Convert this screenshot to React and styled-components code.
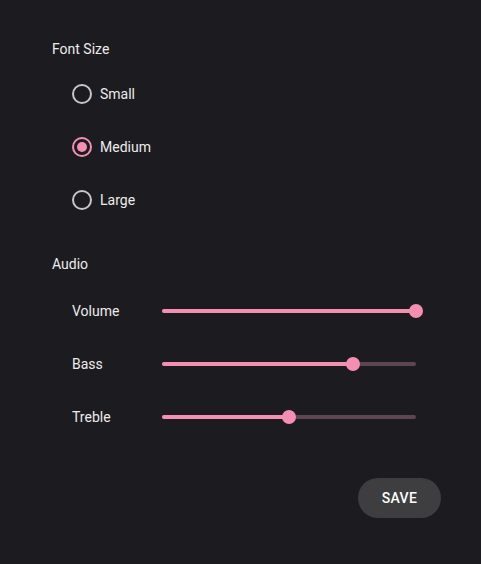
import React, { useState } from "react";
import styled, { createGlobalStyle } from "styled-components";

const Global = createGlobalStyle`
  html, body { margin: 0; padding: 0; background: #1c1b1f; }
  body { font-family: Roboto, "Noto Sans", Arial, sans-serif; color: #ececec; }
  * { box-sizing: border-box; }
`;

const Page = styled.div`
  width: 481px;
  height: 564px;
  background: #1c1b1f;
  padding: 39px 40px 0 52px;
  display: flex;
  flex-direction: column;
`;

const Heading = styled.div`
  font-size: 14px;
  line-height: 20px;
  color: #ececec;
  margin-top: ${(p) => p.$top || 0}px;
`;

const Group = styled.div`
  display: flex;
  flex-direction: column;
  gap: 15px;
  padding-left: 20px;
  margin-top: ${(p) => p.$top || 18}px;
`;

const RadioRow = styled.label`
  display: flex;
  align-items: center;
  height: 38px;
  gap: 8px;
  cursor: pointer;
  font-size: 14px;
  color: #ececec;
`;

const RadioCircle = styled.span`
  width: 20px;
  height: 20px;
  border-radius: 50%;
  border: 2px solid ${(p) => (p.$checked ? "#f48fb1" : "#c9c5ca")};
  display: flex;
  align-items: center;
  justify-content: center;
  flex-shrink: 0;
  &::after {
    content: "";
    width: 10px;
    height: 10px;
    border-radius: 50%;
    background: #f48fb1;
    display: ${(p) => (p.$checked ? "block" : "none")};
  }
`;

const SliderRow = styled.div`
  display: flex;
  align-items: center;
  height: 38px;
`;

const SliderLabel = styled.span`
  width: 90px;
  font-size: 14px;
  color: #ececec;
`;

const Track = styled.div`
  position: relative;
  width: 254px;
  height: 4px;
  border-radius: 2px;
  background: #5f4452;
`;

const Fill = styled.div`
  position: absolute;
  left: 0;
  top: 0;
  height: 4px;
  border-radius: 2px;
  background: #f48fb1;
`;

const Thumb = styled.div`
  position: absolute;
  top: 50%;
  width: 14px;
  height: 14px;
  border-radius: 50%;
  background: #f48fb1;
  transform: translate(-50%, -50%);
`;

const Footer = styled.div`
  display: flex;
  justify-content: flex-end;
  margin-top: 42px;
`;

const SaveButton = styled.button`
  width: 83px;
  height: 40px;
  border-radius: 20px;
  border: none;
  background: #3e3d40;
  color: #ffffff;
  font-family: inherit;
  font-size: 14px;
  font-weight: 500;
  letter-spacing: 0.3px;
  cursor: pointer;
`;

function Slider({ label, value }) {
  return (
    <SliderRow>
      <SliderLabel>{label}</SliderLabel>
      <Track>
        <Fill style={{ width: `${value}%` }} />
        <Thumb style={{ left: `${value}%` }} />
      </Track>
    </SliderRow>
  );
}

export default function App() {
  const [size, setSize] = useState("Medium");
  return (
    <>
      <Global />
      <Page>
        <Heading>Font Size</Heading>
        <Group $top={16}>
          {["Small", "Medium", "Large"].map((s) => (
            <RadioRow key={s} onClick={() => setSize(s)}>
              <RadioCircle $checked={size === s} />
              {s}
            </RadioRow>
          ))}
        </Group>
        <Heading $top={35}>Audio</Heading>
        <Group>
          <Slider label="Volume" value={100} />
          <Slider label="Bass" value={75} />
          <Slider label="Treble" value={50} />
        </Group>
        <Footer>
          <SaveButton>SAVE</SaveButton>
        </Footer>
      </Page>
    </>
  );
}
